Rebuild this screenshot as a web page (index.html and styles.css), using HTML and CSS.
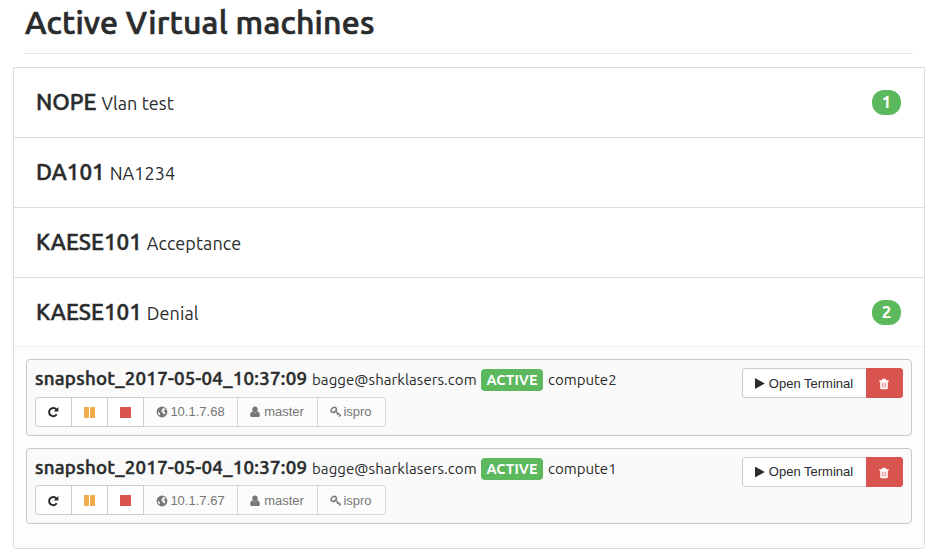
FILE: index.html
```html
<!DOCTYPE html>
<html lang="en">
<head>
<meta charset="utf-8">
<title>Active Virtual machines</title>
<link rel="stylesheet" href="styles.css">
</head>
<body>
<svg class="defs" aria-hidden="true">
  <symbol id="repeat" viewBox="0 0 12 12"><path d="M9.4 3.5A4.1 4.1 0 1 0 9.7 8.3" fill="none" stroke="currentColor" stroke-width="2"/><path d="M11.4.9v4.6H6.8z" fill="currentColor"/></symbol>
  <symbol id="globe" viewBox="0 0 12 12"><circle cx="6" cy="6" r="5.4" fill="currentColor"/><path d="M6.6 2l2.1.4 1.2 1.4-1.6.3-1 1.1 1.6.5.4 1.3-1.3 1.8-1-1.8-1.5-1.2.2-1.7.9-.8zM1.8 5.6l1.8 1.5.6 1.3-.4 1.2L2.2 8z" fill="#fbfbfb"/></symbol>
  <symbol id="user" viewBox="0 0 12 12"><ellipse cx="6" cy="3.4" rx="2.7" ry="2.9" fill="currentColor"/><path d="M1.2 9.2c0-2.2.8-3.5 2.3-3.7 1.4 1.2 3.6 1.2 5 0 1.5.2 2.3 1.5 2.3 3.7 0 1.2-.6 1.8-1.6 1.8H2.8c-1 0-1.6-.6-1.6-1.8z" fill="currentColor"/></symbol>
  <symbol id="key" viewBox="0 0 12 12"><g fill="none" stroke="currentColor"><ellipse cx="3.7" cy="3.9" rx="2.9" ry="2.2" transform="rotate(-40 3.7 3.9)" stroke-width="1.5"/><path d="M5.4 5.2l5.4 4.6M6.9 8.8l1.7-1.7M9 10.6l1.8-2" stroke-width="1.4"/></g></symbol>
  <symbol id="trash" viewBox="0 0 12 12"><path d="M1.2 2.2h2.6L4.6.8h2.8l.8 1.4h2.6v1.2H1.2zM2.2 3.2h7.6v6.6c0 .8-.4 1.4-1.1 1.4H3.3c-.7 0-1.1-.6-1.1-1.4z" fill="currentColor"/><path d="M4.3 4.6v5M6 4.6v5M7.7 4.6v5" stroke="#d9534f" stroke-width=".6"/></symbol>
</svg>
<h1>Active Virtual machines</h1>
<main class="panel">
  <section class="row"><h2>NOPE</h2><span class="desc">Vlan test</span><b class="pill">1</b></section>
  <section class="row"><h2>DA101</h2><span class="desc">NA1234</span></section>
  <section class="row"><h2>KAESE101</h2><span class="desc">Acceptance</span></section>
  <section class="row last"><h2>KAESE101</h2><span class="desc">Denial</span><b class="pill">2</b></section>
  <div class="body">
    <article class="vm first">
      <div class="info">
        <div class="line"><h3>snapshot_2017-05-04_10:37:09</h3><span class="mail">bagge@sharklasers.com</span><span class="label">ACTIVE</span><span class="host">compute2</span></div>
        <div class="group">
          <button class="btn act"><svg class="ic"><use href="#repeat"/></svg></button><button class="btn act"><i class="pause"></i></button><button class="btn act"><i class="stop"></i></button><span class="btn meta ip"><svg class="ic"><use href="#globe"/></svg>10.1.7.68</span><span class="btn meta user"><svg class="ic"><use href="#user"/></svg>master</span><span class="btn meta key"><svg class="ic"><use href="#key"/></svg>ispro</span>
        </div>
      </div>
      <div class="group tools"><button class="btn term"><i class="play"></i>Open Terminal</button><button class="btn del"><svg class="ic"><use href="#trash"/></svg></button></div>
    </article>
    <article class="vm">
      <div class="info">
        <div class="line"><h3>snapshot_2017-05-04_10:37:09</h3><span class="mail">bagge@sharklasers.com</span><span class="label">ACTIVE</span><span class="host">compute1</span></div>
        <div class="group low">
          <button class="btn act"><svg class="ic"><use href="#repeat"/></svg></button><button class="btn act"><i class="pause"></i></button><button class="btn act"><i class="stop"></i></button><span class="btn meta ip"><svg class="ic"><use href="#globe"/></svg>10.1.7.67</span><span class="btn meta user"><svg class="ic"><use href="#user"/></svg>master</span><span class="btn meta key"><svg class="ic"><use href="#key"/></svg>ispro</span>
        </div>
      </div>
      <div class="group tools"><button class="btn term"><i class="play"></i>Open Terminal</button><button class="btn del"><svg class="ic"><use href="#trash"/></svg></button></div>
    </article>
  </div>
</main>
</body>
</html>
```
FILE: styles.css
```css
* { box-sizing: border-box; }
body { margin: 0; height: 554px; overflow: hidden; background: #fff; color: #292b2c; font-family: Ubuntu, "Noto Sans", sans-serif; white-space: nowrap; }
.defs { display: none; }
h1, h2, h3 { margin: 0; font-weight: 500; -webkit-text-stroke: .5px #292b2c; }
h1 { height: 54px; margin: 0 20px 13px 25px; padding-top: 1px; border-bottom: 1px solid #e5e5e5; font-size: 32px; line-height: 42px; letter-spacing: .22px; -webkit-text-stroke-width: .7px; }
.panel { width: 912px; height: 482px; margin-left: 13px; border: 1px solid #ddd; border-radius: 0 0 4px 4px; overflow: hidden; background: #fdfdfd; }
.row { display: flex; align-items: baseline; height: 70px; padding: 19px 23px 0 22px; border-bottom: 1px solid #ddd; background: #fff; line-height: 30px; }
.row.last { border-color: #eee; height: 69px; }
h2 { font-size: 22.4px; margin-right: 5px; -webkit-text-stroke-width: .5px; }
.desc { font-size: 18px; letter-spacing: .08px; }
.pill { align-self: flex-start; margin: 3px 0 0 auto; width: 29px; height: 25px; border-radius: 12px; background: #5cb85c; color: #fff; font-size: 17px; line-height: 24px; text-align: center; }
.body { padding: 12px; }
.vm { display: flex; justify-content: space-between; height: 76px; padding: 8px; border: 1px solid #c8c8c8; border-radius: 4px; background: #fafafa; }
.vm.first { height: 77px; margin-bottom: 12px; }
.line { display: flex; align-items: baseline; height: 28px; line-height: 22px; font-size: 15px; }
.vm.first .line { height: 29px; }
h3 { font-size: 18.7px; letter-spacing: .27px; width: 277px; }
.mail { width: 169px; letter-spacing: .07px; }
.label { width: 62px; height: 22px; margin-right: 5px; border-radius: 4px; background: #5cb85c; color: #fff; font-size: 14.4px; font-weight: 700; text-align: center; }
.group { display: flex; }
.btn { display: flex; align-items: center; justify-content: center; height: 30px; margin: 0 0 0 -1px; padding: 0; border: 1px solid #ccc; background: #fff; color: #292b2c; font: 13px/18px "Liberation Sans", sans-serif; }
.btn:first-child { margin-left: 0; border-radius: 3px 0 0 3px; }
.btn:last-child { border-radius: 0 3px 3px 0; }
.ic { width: 12px; height: 12px; }
.act { width: 37px; }
.act:first-child { padding-right: 1px; }
.meta { background: #fcfcfc; border-color: #d8d8d8; color: #777; }
.low .btn { padding-top: 1px; }
.ip { width: 95px; gap: 2px; border-left-color: #ccc; }
.user { width: 81px; gap: 3px; padding-right: 2px; }
.key { width: 69px; gap: 1px; padding-right: 1px; }
.pause { width: 11px; height: 11px; border: solid #f0ad4e; border-width: 0 5px; }
.stop { width: 11px; height: 11px; background: #d9534f; }
.term { width: 125px; gap: 4px; padding: 1px 1px 0 0; }
.vm:last-child .term { padding-top: 0; }
.play { width: 10px; height: 11px; background: #292b2c; clip-path: polygon(0 0, 100% 50%, 0 100%); }
.del { width: 37px; border-color: #d9534f; background: #d9534f; color: #fff; padding: 1px 1px 0 0; }
```
